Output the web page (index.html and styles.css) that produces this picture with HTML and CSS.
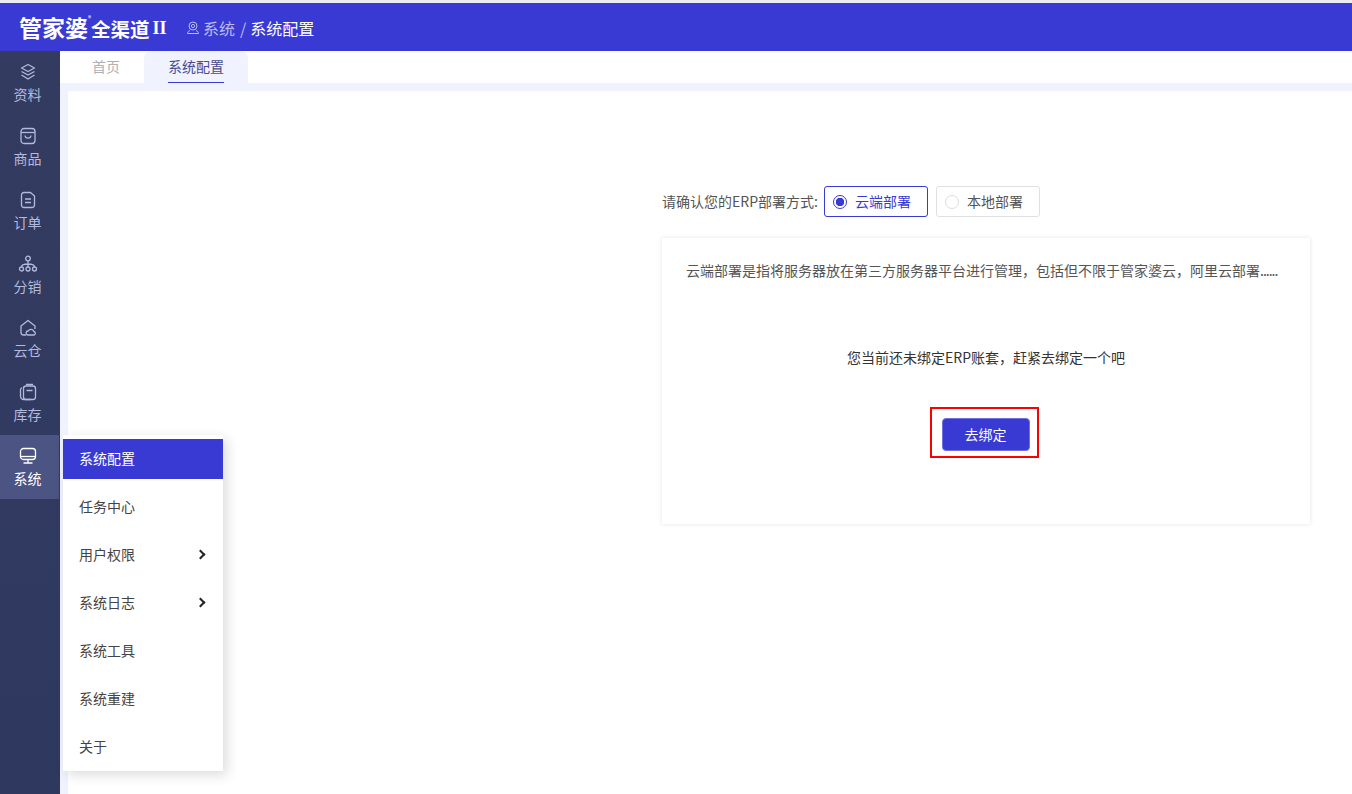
FILE: index.html
```html
<!DOCTYPE html>
<html lang="zh-CN">
<head>
  <meta charset="UTF-8">
  <title>系统配置</title>
  <link rel="stylesheet" href="styles.css">
</head>
<body>

  <header class="topbar">
    <div class="logo">
      <span class="logo-main">管家婆</span><sup class="logo-reg">®</sup><span class="logo-sub">全渠道</span><span class="logo-num">II</span>
    </div>
    <div class="crumbs">
      <svg class="crumb-icon" viewBox="0 0 14 14" width="14" height="14" fill="none" stroke="currentColor" stroke-width="1">
        <circle cx="7" cy="5" r="4"/>
        <circle cx="7" cy="5" r="1.6"/>
        <path d="M4 9.500C2.500 10 1.500 11 1.500 12.500h11c0-1.500-1-2.500-2.500-3"/>
      </svg>
      <span>系统</span><span class="crumb-sep">/</span><span class="crumb-now">系统配置</span>
    </div>
  </header>

  <div class="layout">
    <nav class="sidebar">
      <a class="side-item">
        <svg viewBox="0 0 18 18" width="18" height="18" fill="none" stroke="currentColor" stroke-width="1.300" stroke-linejoin="round">
          <path d="M9 1.500l6.500 3.500L9 8.500 2.500 5z"/>
          <path d="M2.500 8.500L9 12l6.500-3.500"/>
          <path d="M2.500 12L9 16l6.500-4"/>
        </svg>
        <span>资料</span>
      </a>
      <a class="side-item">
        <svg viewBox="0 0 18 18" width="18" height="18" fill="none" stroke="currentColor" stroke-width="1.300" stroke-linejoin="round">
          <rect x="2" y="1.500" width="14" height="15" rx="3"/>
          <path d="M2 5.500h14"/>
          <path d="M6 8.500c.5 3.500 5.500 3.500 6 0"/>
        </svg>
        <span>商品</span>
      </a>
      <a class="side-item">
        <svg viewBox="0 0 18 18" width="18" height="18" fill="none" stroke="currentColor" stroke-width="1.300" stroke-linejoin="round">
          <path d="M5 1.500h6.500L15.500 5v9a2.500 2.500 0 0 1-2.500 2.500H5A2.500 2.500 0 0 1 2.500 14V4A2.500 2.500 0 0 1 5 1.500z"/>
          <path d="M6 8h6M6 11.500h6"/>
        </svg>
        <span>订单</span>
      </a>
      <a class="side-item">
        <svg viewBox="0 0 20 18" width="20" height="18" fill="none" stroke="currentColor" stroke-width="1.300">
          <circle cx="10" cy="3.500" r="2.300"/>
          <circle cx="3.500" cy="14" r="2"/>
          <circle cx="10" cy="14" r="2"/>
          <circle cx="16.500" cy="14" r="2"/>
          <path d="M10 6v6M3.500 12c0-2.500 2-3 6.500-3s6.500.5 6.500 3"/>
        </svg>
        <span>分销</span>
      </a>
      <a class="side-item">
        <svg viewBox="0 0 18 18" width="18" height="18" fill="none" stroke="currentColor" stroke-width="1.300" stroke-linejoin="round">
          <path d="M7 16H4.500A2.500 2.500 0 0 1 2 13.500V7l7-5.500L16 7v3"/>
          <path d="M9 16a2 2 0 0 1 .3-4 3 3 0 0 1 5.600.5 1.800 1.800 0 0 1 .1 3.500z"/>
        </svg>
        <span>云仓</span>
      </a>
      <a class="side-item">
        <svg viewBox="0 0 18 18" width="18" height="18" fill="none" stroke="currentColor" stroke-width="1.300" stroke-linejoin="round">
          <path d="M3 4.500C1.800 5 1.500 6 1.500 7v6c0 2 1.500 3.500 3.500 3.500h7"/>
          <rect x="4.500" y="3" width="12" height="13.500" rx="2.500"/>
          <path d="M7 1.500h7M7.500 7.500h6"/>
        </svg>
        <span>库存</span>
      </a>
      <a class="side-item side-active">
        <svg viewBox="0 0 18 18" width="18" height="18" fill="none" stroke="currentColor" stroke-width="1.300" stroke-linejoin="round">
          <rect x="1.500" y="1.500" width="15" height="11" rx="3"/>
          <path d="M1.500 9.500h15"/>
          <path d="M4.500 16h9M9 12.500V16"/>
        </svg>
        <span>系统</span>
      </a>
    </nav>

    <div class="main">
      <div class="tabs">
        <div class="tab">首页</div>
        <div class="tab tab-active"><span>系统配置</span></div>
      </div>
      <div class="content-wrap">
        <div class="content">
          <div class="deploy-row">
            <span class="deploy-label">请确认您的ERP部署方式:</span>
            <label class="radio-box radio-on"><i class="dot"></i><span>云端部署</span></label>
            <label class="radio-box"><i class="dot"></i><span>本地部署</span></label>
          </div>
          <div class="card">
            <p class="card-desc">云端部署是指将服务器放在第三方服务器平台进行管理，包括但不限于管家婆云，阿里云部署<span class="dots">......</span></p>
            <p class="card-tip">您当前还未绑定ERP账套，赶紧去绑定一个吧</p>
            <div class="mark">
              <button class="bind-btn">去绑定</button>
            </div>
          </div>
        </div>
      </div>
    </div>

    <div class="popmenu">
      <div class="pop-item pop-active">系统配置</div>
      <div class="pop-item">任务中心</div>
      <div class="pop-item">用户权限<span class="arrow"></span></div>
      <div class="pop-item">系统日志<span class="arrow"></span></div>
      <div class="pop-item">系统工具</div>
      <div class="pop-item">系统重建</div>
      <div class="pop-item">关于</div>
    </div>
  </div>

</body>
</html>
```

FILE: styles.css
```css
* {
  box-sizing: border-box;
}

html, body {
  height: 100%;
}

body {
  margin: 0;
  padding-top: 3px;
  height: 794px;
  overflow: hidden;
  background-color: #ebebf2;
  font-family: "Noto Sans CJK SC", "Noto Sans", sans-serif;
  font-size: 14px;
  color: #555;
}

.topbar {
  height: 48px;
  display: flex;
  align-items: center;
  background-color: #3939d3;
  color: #fff;
}

.logo {
  display: flex;
  align-items: center;
  margin-left: 19px;
  width: 167px;
  font-weight: 700;
  white-space: nowrap;
}

.logo-main {
  font-size: 23px;
}

.logo-reg {
  font-size: 6px;
  margin-top: -18px;
}

.logo-sub {
  font-size: 19.500px;
  margin-top: 2px;
}

.logo-num {
  font-family: "Liberation Serif", serif;
  font-size: 18px;
  margin-top: 2px;
  margin-left: 3px;
}

.crumbs {
  display: flex;
  align-items: center;
  margin-top: 2px;
  font-size: 16px;
  color: #b9bdf0;
  white-space: pre;
}

.crumb-icon {
  margin-right: 3px;
}

.crumb-sep {
  margin: 0 4px 0 5px;
}

.crumb-now {
  color: #fff;
}

.layout {
  position: relative;
  display: flex;
  height: 743px;
}

.sidebar {
  width: 60px;
  flex-shrink: 0;
  background: linear-gradient(180deg, #343b60, #2f3960);
}

.side-item {
  width: 59px;
  height: 64px;
  display: flex;
  flex-direction: column;
  align-items: center;
  padding: 12px 4px 0 0;
  color: #b4b9de;
  font-size: 14px;
  line-height: 20px;
}

.side-item svg {
  height: 18px;
  margin-bottom: 3px;
}

.side-active {
  background-color: #4b5482;
  color: #fff;
}

.main {
  flex: 1;
  display: flex;
  flex-direction: column;
  background-color: #fff;
}

.tabs {
  height: 32px;
  display: flex;
  flex-shrink: 0;
  padding-left: 8px;
}

.tab {
  width: 76px;
  text-align: center;
  font-size: 14px;
  line-height: 30px;
  color: #b0b0b6;
}

.tab-active {
  width: 104px;
  border-radius: 8px 8px 0 0;
  background-color: #f0f2fd;
  color: #4a4a8e;
}

.tab-active span {
  display: inline-block;
  height: 32px;
  border-bottom: 1px solid #3939d3;
}

/* top and left strips of the pale frame round the white panel */
.content-wrap {
  flex: 1;
  padding: 8px 0 0 8px;
  background: linear-gradient(#f0f2fd, #f0f2fd) no-repeat;
  background-color: #fff;
  background-size: 100% 8px;
  box-shadow: inset 8px 0 0 #f0f2fd;
}

.content {
  padding: 95px 42px 0 594px;
}

.deploy-row {
  display: flex;
  align-items: center;
  gap: 8px;
  height: 31px;
  line-height: 28px;
}

.deploy-label {
  width: 154px;
  margin-top: -2px;
  color: #555;
  white-space: nowrap;
}

.radio-box {
  width: 104px;
  height: 31px;
  display: flex;
  align-items: center;
  padding-left: 8px;
  border: 1px solid #dfdfe6;
  border-radius: 3px;
  color: #555;
}

.radio-box span {
  margin-top: -2px;
}

.dot {
  width: 14px;
  height: 14px;
  margin-right: 8px;
  border: 1px solid #dcdce4;
  border-radius: 50%;
  background-color: #fff;
}

.radio-on {
  border-color: #3939d3;
  color: #3939d3;
}

.radio-on .dot {
  border-color: #3939d3;
  background: radial-gradient(circle, #3939d3 0 4px, #fff 4.500px);
}

.card {
  height: 286px;
  margin-top: 21px;
  padding-top: 22px;
  background-color: #fff;
  box-shadow: 0 0 4px rgba(60, 60, 120, 0.14);
  text-align: center;
}

.card-desc {
  margin: 0;
  padding-left: 24px;
  line-height: 20px;
  text-align: left;
  white-space: nowrap;
  color: #555;
}

.dots {
  letter-spacing: -1px;
}

.card-tip {
  margin: 67px 0 0;
  line-height: 20px;
  color: #333;
}

.mark {
  display: flex;
  width: 109px;
  height: 51px;
  margin: 40px 0 0 268px;
  padding: 9px 0 0 10px;
  border: 2px solid #f00;
}

.bind-btn {
  width: 88px;
  height: 33px;
  padding: 0 1px 2px 0;
  border: 1px solid #7070de;
  border-radius: 4px;
  background-color: #3939d3;
  color: #fff;
  font-family: inherit;
  font-size: 14px;
}

.popmenu {
  position: absolute;
  left: 63px;
  top: 384px;
  width: 160px;
  height: 336px;
  padding-top: 4px;
  background-color: #fff;
  box-shadow: 4px 4px 12px rgba(0, 0, 0, 0.14);
}

.pop-item {
  position: relative;
  height: 48px;
  padding-left: 16px;
  font-size: 14px;
  line-height: 46px;
  color: #444;
}

.pop-active {
  height: 40px;
  margin-bottom: 4px;
  background-color: #3939d3;
  color: #fff;
  line-height: 38px;
}

.arrow {
  position: absolute;
  right: 19px;
  top: 20px;
  width: 7px;
  height: 7px;
  border-top: 2px solid #222;
  border-right: 2px solid #222;
  transform: rotate(45deg);
}
```
